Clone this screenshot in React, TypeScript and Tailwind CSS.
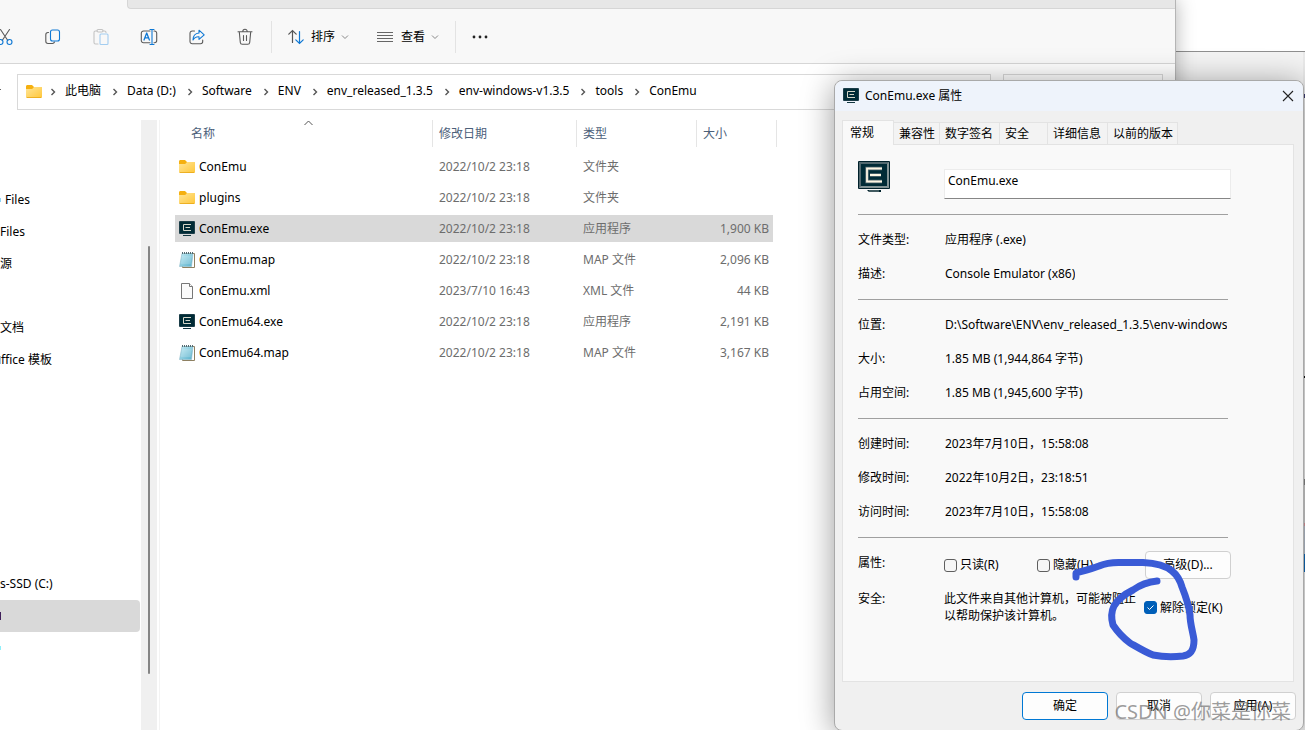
import { useState } from "react";
import type { ReactNode } from "react";

type FileKind = "folder" | "exe" | "map" | "xml";

const files: { name: string; date: string; type: string; size: string; kind: FileKind }[] = [
  { name: "ConEmu", date: "2022/10/2 23:18", type: "文件夹", size: "", kind: "folder" },
  { name: "plugins", date: "2022/10/2 23:18", type: "文件夹", size: "", kind: "folder" },
  { name: "ConEmu.exe", date: "2022/10/2 23:18", type: "应用程序", size: "1,900 KB", kind: "exe" },
  { name: "ConEmu.map", date: "2022/10/2 23:18", type: "MAP 文件", size: "2,096 KB", kind: "map" },
  { name: "ConEmu.xml", date: "2023/7/10 16:43", type: "XML 文件", size: "44 KB", kind: "xml" },
  { name: "ConEmu64.exe", date: "2022/10/2 23:18", type: "应用程序", size: "2,191 KB", kind: "exe" },
  { name: "ConEmu64.map", date: "2022/10/2 23:18", type: "MAP 文件", size: "3,167 KB", kind: "map" },
];

const crumbs = [
  "此电脑",
  "Data (D:)",
  "Software",
  "ENV",
  "env_released_1.3.5",
  "env-windows-v1.3.5",
  "tools",
  "ConEmu",
];

// mark: the last pixel of an icon that is scrolled out on the left
const treeItems = [
  { text: "" },
  { text: "" },
  { text: "Files", mark: "mr-1 h-1 bg-[#8ed3f7]" },
  { text: "Files" },
  { text: "源" },
  { text: "" },
  { text: "文档" },
  { text: "ffice 模板", mark: "h-2 bg-[#9fc3e8]" },
  { text: "" },
  { text: "" },
  { text: "" },
  { text: "" },
  { text: "" },
  { text: "" },
  { text: "s-SSD (C:)" },
  { text: "", mark: "h-2 bg-[#40205a]", selected: true },
  { text: "", mark: "h-1 bg-[#8ff0fa]" },
];

const tabs = [
  { label: "兼容性", width: "w-[46px]" },
  { label: "数字签名", width: "w-[60px]" },
  { label: "安全", width: "w-12" },
  { label: "详细信息", width: "w-[60px]" },
  { label: "以前的版本", width: "w-[70px]" },
];

const sections = [
  [
    ["文件类型:", "应用程序 (.exe)"],
    ["描述:", "Console Emulator (x86)"],
  ],
  [
    ["位置:", "D:\\Software\\ENV\\env_released_1.3.5\\env-windows"],
    ["大小:", "1.85 MB (1,944,864 字节)"],
    ["占用空间:", "1.85 MB (1,945,600 字节)"],
  ],
  [
    ["创建时间:", "2023年7月10日，15:58:08"],
    ["修改时间:", "2022年10月2日，23:18:51"],
    ["访问时间:", "2023年7月10日，15:58:08"],
  ],
];

// edges of the windows that peek out right of the dialog
const slivers = [
  { height: "h-[42px]", color: "bg-[#e9e9e9]" },
  { height: "h-1", color: "bg-[#3b3b70]" },
  { height: "h-[278px]", color: "bg-[#ebebeb]" },
  { height: "h-0.5", color: "bg-[#111111]" },
  { height: "h-[101px]", color: "bg-[#f0f0f0]" },
  { height: "h-[6px]", color: "bg-[#8a8a8a]" },
  { height: "h-[38px]", color: "bg-[#cfcfcf]" },
  { height: "h-[3px]", color: "bg-[#e09aa0]" },
  { height: "h-[28px]", color: "bg-[#b9c3d0]" },
  { height: "h-[18px]", color: "bg-[#0f6cbd]" },
];

function FolderIcon() {
  return (
    <svg width="16" height="16" viewBox="0 0 16 16" className="shrink-0">
      <defs>
        <linearGradient id="folder" x1="0" y1="0" x2="1" y2="1">
          <stop offset="0" stopColor="#ffe597" />
          <stop offset="1" stopColor="#ffc73a" />
        </linearGradient>
      </defs>
      <path d="M0 2.5C0 1.7.6 1 1.400 1H6l2 2h6.500c.8 0 1.500.6 1.500 1.400V8H0z" fill="#f5b010" />
      <path d="M0 5h6.200L8 3h6.800c.7 0 1.200.5 1.200 1.200v8.600c0 .7-.5 1.200-1.200 1.200H1.200C.5 14 0 13.500 0 12.800z" fill="url(#folder)" />
      <path d="M.3 13.300c.2.400.5.700.9.700h13.600c.4 0 .7-.3.9-.7z" fill="#e8a512" />
    </svg>
  );
}

function ExeIcon() {
  return (
    <svg width="16" height="16" viewBox="0 0 16 16" className="shrink-0">
      <rect x="0" y="0" width="16" height="13" rx="1" fill="#1b3d48" />
      <rect x="1" y="1" width="14" height="11" fill="#002b36" />
      <path d="M12 3.500H4.500v6H12M6.500 6.500H11" fill="none" stroke="#d5d6c9" />
      <rect x="4" y="14" width="8" height="1" fill="#123640" />
    </svg>
  );
}

function BigExeIcon() {
  return (
    <svg width="32" height="32" viewBox="0 0 32 32" className="shrink-0">
      <rect width="32" height="28" rx="1" fill="#00212b" />
      <rect x="1" y="1" width="30" height="26" fill="#839496" />
      <path d="M1 1h30l-2 2H3v22l-2 2z" fill="#53696f" />
      <rect x="3" y="3" width="26" height="22" fill="#002b36" />
      <path d="M24 7.500H9v13h15M12 14h11" fill="none" stroke="#586e75" strokeWidth="3.500" />
      <path d="M24 7.500H9v13h15M12 14h11" fill="none" stroke="#fdf6e3" strokeWidth="1.800" />
      <path d="M9 29h14v2H11z" fill="#00212b" />
      <path d="M11 30h10" stroke="#839496" />
    </svg>
  );
}

function MapIcon() {
  return (
    <svg width="16" height="16" viewBox="0 0 16 16" className="shrink-0">
      <defs>
        <linearGradient id="note" x1="0" y1="0" x2="1" y2="1">
          <stop offset="0" stopColor="#c4ecf5" />
          <stop offset="1" stopColor="#58b0cb" />
        </linearGradient>
      </defs>
      <path d="M5 1.500h10.500v14H3.500z" fill="#fff" stroke="#8e8061" />
      <path d="M3 1.500h11l-1.500 13H.500z" fill="url(#note)" stroke="#89b8c7" strokeWidth=".6" />
      <path d="M3 5h9.500M2.700 7h9.500M2.400 9h9.500M2 11h9.700" stroke="#fff" strokeWidth=".5" opacity=".6" />
      <path d="M3 1h11" stroke="#536a72" strokeWidth="1.800" strokeDasharray="1 1" />
    </svg>
  );
}

function XmlIcon() {
  return (
    <svg width="16" height="16" viewBox="0 0 16 16" className="shrink-0" fill="#fbfbfb" stroke="#777" strokeWidth="1">
      <path d="M2.500.500h8l3 3v12h-11z" />
      <path d="M10.500.500v3h3" />
    </svg>
  );
}

function FileIcon({ kind }: { kind: FileKind }) {
  if (kind === "folder") return <FolderIcon />;
  if (kind === "exe") return <ExeIcon />;
  if (kind === "map") return <MapIcon />;
  return <XmlIcon />;
}

function Chevron({ dir }: { dir: "right" | "down" | "up" }) {
  if (dir === "right") {
    return (
      <svg width="6" height="8" viewBox="0 0 6 8" fill="none" stroke="#555" strokeWidth="1.400" className="shrink-0">
        <path d="M1.500 1l3 3-3 3" />
      </svg>
    );
  }
  if (dir === "down") {
    return (
      <svg width="8" height="6" viewBox="0 0 8 6" fill="none" stroke="#888" className="ml-[6px]">
        <path d="M1 1.500l3 3 3-3" />
      </svg>
    );
  }
  return (
    <svg width="9" height="6" viewBox="0 0 9 6" fill="none" stroke="#555">
      <path d="M.500 5l4-4 4 4" />
    </svg>
  );
}

function ToolButton({ label, children }: { label: string; children: ReactNode }) {
  return (
    <button aria-label={label} className="flex h-10 w-12 shrink-0 items-center justify-center">
      <svg width="18" height="18" viewBox="0 0 18 18" fill="none" stroke="#5a5a5a" strokeWidth="1.100" strokeLinecap="round" strokeLinejoin="round">
        {children}
      </svg>
    </button>
  );
}

function Toolbar() {
  return (
    <div className="flex h-[54px] items-center pt-px">
      <div className="-ml-[19px] flex">
        <ToolButton label="剪切">
          <path d="M4.500 1.500l7.300 11M13.500 1.500L6.200 12.500" />
          <circle cx="4.500" cy="14" r="2.500" stroke="#0f78d4" />
          <circle cx="13.500" cy="14" r="2.500" stroke="#0f78d4" />
        </ToolButton>
        <ToolButton label="复制">
          <path d="M4.500 4.500H4A2.200 2.200 0 0 0 1.800 6.700v6.600A2.200 2.200 0 0 0 4 15.500h4.500a2.200 2.200 0 0 0 2-1.500" />
          <rect x="6.500" y="2" width="9" height="11" rx="2" stroke="#0f78d4" />
        </ToolButton>
        <ToolButton label="粘贴">
          <g stroke="#c4c4c4">
            <path d="M5 3H3.500A1.500 1.500 0 0 0 2 4.500v10A1.500 1.500 0 0 0 3.500 16H6M11 3h1.500A1.500 1.500 0 0 1 14 4.500" />
            <rect x="5" y="1.500" width="6" height="2.500" rx="1.200" />
          </g>
          <rect x="8" y="6" width="8" height="10.500" rx="1" stroke="#a3cdf0" />
        </ToolButton>
        <ToolButton label="重命名">
          <path d="M10 3H3.500A2.200 2.200 0 0 0 1.300 5.200v7.300a2.200 2.200 0 0 0 2.200 2.200H10M14 3h.500a2.200 2.200 0 0 1 2.200 2.200v7.300a2.200 2.200 0 0 1-2.200 2.200H14" />
          <g stroke="#0f78d4">
            <path d="M12 1.500v15M10 1.500h4M10 16.500h4" />
            <path d="M4 12l2.700-7 2.700 7M5 9.800h3.500" strokeWidth="1.300" />
          </g>
        </ToolButton>
        <ToolButton label="共享">
          <path d="M6.500 3H4.200A2.200 2.200 0 0 0 2 5.200v8.300a2.200 2.200 0 0 0 2.200 2.200h8.300a2.200 2.200 0 0 0 2.200-2.200V12" />
          <path d="M11 2.200l5.200 4.600L11 11.300V8.700C8 8.500 6.300 9.500 5 12c.1-4.200 2.200-6.700 6-7z" stroke="#0f78d4" />
        </ToolButton>
        <ToolButton label="删除">
          <path d="M2 3.800h14M6.800 3.500a2.200 2.200 0 0 1 4.400 0M3.300 4l1 10.500a2 2 0 0 0 2 1.800h5.400a2 2 0 0 0 2-1.800l1-10.500M7.500 7.500v5M10.500 7.500v5" />
        </ToolButton>
      </div>
      <div className="ml-0.5 h-8 w-px bg-[#e3e3e3]" />
      <button className="ml-4 flex items-center">
        <svg width="16" height="16" viewBox="0 0 16 16" fill="none" strokeWidth="1.200" strokeLinecap="round" className="mr-[7px]">
          <path d="M4.500 13.500v-12M.800 5.200l3.700-3.700 3.700 3.700" stroke="#555" />
          <path d="M11.500 2.500v12M7.800 10.800l3.700 3.700 3.700-3.700" stroke="#0f78d4" />
        </svg>
        排序
        <Chevron dir="down" />
      </button>
      <button className="ml-7 flex items-center">
        <svg width="16" height="12" viewBox="0 0 16 12" stroke="#666" className="mr-2">
          <path d="M0 1.500h16M0 4.500h16M0 7.500h16M0 10.500h16" />
        </svg>
        查看
        <Chevron dir="down" />
      </button>
      <div className="ml-4 h-8 w-px bg-[#e3e3e3]" />
      <button aria-label="更多" className="ml-4">
        <svg width="16" height="4" viewBox="0 0 16 4" fill="#222">
          <circle cx="2" cy="2" r="1.400" />
          <circle cx="8" cy="2" r="1.400" />
          <circle cx="14" cy="2" r="1.400" />
        </svg>
      </button>
    </div>
  );
}

function FileTable() {
  const headers = [
    { label: "名称", cls: "w-[258px]", pad: "pl-4" },
    { label: "修改日期", cls: "w-36", pad: "pl-[6px]" },
    { label: "类型", cls: "w-[120px]", pad: "pl-[6px]" },
    { label: "大小", cls: "w-20", pad: "pl-[6px]" },
  ];

  return (
    <table className="ml-[15px] w-[602px] table-fixed border-separate border-spacing-0 self-start">
      <thead>
        <tr className="h-[31px]">
          {headers.map((h, i) => (
            <th key={h.label} className={`${h.cls} p-0 align-top font-normal`}>
              <div className={`relative flex h-[27px] items-center border-r border-[#e5e5e5] text-[#4c607a] ${h.pad}`}>
                {h.label}
                {i === 0 && (
                  <span className="absolute top-0 left-[129px]">
                    <Chevron dir="up" />
                  </span>
                )}
              </div>
            </th>
          ))}
        </tr>
      </thead>
      <tbody>
        {files.map((f) => {
          const bg = f.name === "ConEmu.exe" ? "bg-[#d9d9d9]" : "";
          return (
            <tr key={f.name} className="h-[31px] text-[#6d6d6d]">
              <td className={`border-y-2 border-transparent bg-clip-padding p-0 pl-1 text-black ${bg}`}>
                <div className="flex items-center gap-1">
                  <FileIcon kind={f.kind} />
                  {f.name}
                </div>
              </td>
              <td className={`border-y-2 border-transparent bg-clip-padding p-0 pl-[6px] ${bg}`}>{f.date}</td>
              <td className={`border-y-2 border-transparent bg-clip-padding p-0 pl-[6px] ${bg}`}>{f.type}</td>
              <td className={`border-y-2 border-r-4 border-transparent bg-clip-padding p-0 pr-1 text-right ${bg}`}>{f.size}</td>
            </tr>
          );
        })}
      </tbody>
    </table>
  );
}

function Explorer() {
  return (
    <div className="z-10 flex min-w-0 flex-1 flex-col border-r border-[#b5b5b5] bg-white shadow-[0_0_18px_rgba(0,0,0,0.3)]">
      <header className="border-b border-[#d6d6d6] bg-[#f8f8f8]">
        <div className="ml-[127px] h-[9px] rounded-bl border-b border-l border-[#d6d6d6] bg-[#e7e7e7]" />
        <Toolbar />
      </header>
      <div className="flex pt-[10px] pr-3 pb-[10px]">
        <span className="h-9 w-[17px] pt-[15px]">
          <span className="block h-px w-px bg-[#666]" />
        </span>
        <nav className="flex h-9 min-w-0 flex-1 items-center border border-[#d9d9d9] pl-2">
          <FolderIcon />
          {crumbs.map((c) => (
            <span key={c} className="flex items-center whitespace-nowrap">
              <span className="mr-[9px] ml-2">
                <Chevron dir="right" />
              </span>
              <a href="#" className="pr-[3px] pb-0.5">{c}</a>
            </span>
          ))}
        </nav>
        <input aria-label="搜索" className="ml-3 h-9 w-40 border border-[#d9d9d9]" />
      </div>
      <div className="flex flex-1">
        <ul className="w-[141px] overflow-hidden pr-px">
          {treeItems.map((t, i) => (
            <li
              key={i}
              className={`flex h-8 items-center whitespace-nowrap ${t.selected ? "rounded-r-sm bg-[#d9d9d9]" : ""}`}
            >
              {t.mark && <span className={`w-px ${t.mark}`} />}
              {t.text}
            </li>
          ))}
        </ul>
        <div className="w-4 bg-[#f0f0f0] pt-[126px]">
          <div className="ml-[7px] h-[428px] w-0.5 rounded bg-[#858585]" />
        </div>
        <div className="ml-0.5 w-px bg-[#f3f3f3]" />
        <FileTable />
      </div>
    </div>
  );
}

function CheckBox({ label, initial }: { label: string; initial: boolean }) {
  const [checked, setChecked] = useState(initial);

  return (
    <label className="flex items-center gap-[3px] whitespace-nowrap">
      <span className="grid">
        <input
          type="checkbox"
          checked={checked}
          onChange={(e) => setChecked(e.target.checked)}
          className="col-start-1 row-start-1 size-[13px] appearance-none rounded-[3px] border border-[#5f5f5f] bg-[#f6f6f6] checked:border-[#005fb8] checked:bg-[#005fb8]"
        />
        {checked && (
          <svg width="13" height="13" viewBox="0 0 13 13" fill="none" stroke="#fff" className="pointer-events-none col-start-1 row-start-1">
            <path d="M3.500 6.500l2 2 4-4" />
          </svg>
        )}
      </span>
      {label}
    </label>
  );
}

function PropertiesDialog() {
  const [fileName, setFileName] = useState("ConEmu.exe");

  return (
    <div className="absolute top-20 right-px z-20 w-[470px] rounded-lg border border-[#a9a9a9] bg-[#f0f0f0] shadow-[0_4px_32px_rgba(0,0,0,0.4)]">
      <div className="flex h-[30px] items-center rounded-t-lg bg-[#eef3fb] pr-[9px] pl-2">
        <ExeIcon />
        <h1 className="ml-[6px] flex-1">ConEmu.exe 属性</h1>
        <button aria-label="关闭">
          <svg width="12" height="12" viewBox="0 0 12 12" stroke="#222" strokeWidth="1.100">
            <path d="M1 1l10 10M11 1L1 11" />
          </svg>
        </button>
      </div>

      <div className="pt-[9px] pr-[9px] pl-[7px]">
        <div role="tablist" className="flex items-end">
          <button role="tab" aria-selected="true" className="z-10 -mb-px h-[25px] w-[52px] border border-b-0 border-[#e3e3e3] bg-[#f9f9f9] pr-3">
            常规
          </button>
          {tabs.map((t) => (
            <button role="tab" key={t.label} className={`h-[22px] border-t border-r border-[#e3e3e3] bg-[#f3f3f3] pl-[5px] text-left whitespace-nowrap ${t.width}`}>
              {t.label}
            </button>
          ))}
        </div>

        <div className="h-[538px] border border-[#e3e3e3] bg-[#f9f9f9] pt-4 pr-[62px] pl-[15px]">
          <div className="flex h-[45px]">
            <div className="w-[86px]">
              <BigExeIcon />
            </div>
            <input
              aria-label="文件名"
              value={fileName}
              onChange={(e) => setFileName(e.target.value)}
              className="mt-2 h-[30px] min-w-0 flex-1 border border-[#ececec] border-b-[#868686] bg-white px-[3px] pb-2 outline-none"
            />
          </div>

          <div className="pt-2">
            {sections.map((rows, i) => (
              <dl key={i} className="mb-2">
                <div className="mr-[3px] h-px bg-[#a0a0a0]" />
                <div className="pt-2">
                  {rows.map(([label, value]) => (
                    <div key={label} className="flex h-[34px] items-center">
                      <dt className="w-[87px] shrink-0">{label}</dt>
                      <dd className="min-w-0 overflow-hidden whitespace-nowrap">{value}</dd>
                    </div>
                  ))}
                </div>
              </dl>
            ))}
            <div className="mr-[3px] h-px bg-[#a0a0a0]" />
          </div>

          <div className="mt-[13px] flex h-7 items-center">
            <span className="w-[86px] pb-1">属性:</span>
            <div className="w-[93px]">
              <CheckBox label="只读(R)" initial={false} />
            </div>
            <CheckBox label="隐藏(H)" initial={false} />
            <button className="ml-auto h-7 w-[86px] rounded border border-[#d0d0d0] bg-[#fdfdfd]">高级(D)...</button>
          </div>

          <div className="mt-[11px] flex leading-[17px]">
            <span className="w-[86px]">安全:</span>
            <p className="w-[200px]">此文件来自其他计算机，可能被阻止以帮助保护该计算机。</p>
            <CheckBox label="解除锁定(K)" initial={true} />
          </div>
        </div>
      </div>

      <div className="flex justify-end gap-2 pt-[10px] pr-[7px] pb-[10px]">
        <button className="h-7 w-[86px] rounded border border-[#0078d4] bg-[#fdfdfd]">确定</button>
        <button className="h-7 w-[86px] rounded border border-[#d0d0d0] bg-[#fdfdfd]">取消</button>
        <button className="h-7 w-[86px] rounded border border-[#d0d0d0] bg-[#fdfdfd]">应用(A)</button>
      </div>

      {/* pen stroke round the unblock option */}
      <svg width="130" height="110" viewBox="1070 555 130 110" className="pointer-events-none absolute top-[474px] left-[235px]" fill="none" stroke="#3a5bd6" strokeWidth="7" strokeLinecap="round" strokeLinejoin="round">
        <path d="M1076 577V573C1083 571 1091 569 1099 566C1106 563 1112 562 1122 562.500H1143C1156 563 1166 566 1172 571C1177 575 1180 580 1182 587C1186 597 1189 606 1190 615C1190 624 1193 632 1194 640C1194 651 1190 655 1183 656C1174 657 1163 657 1153 655C1145 652 1137 647 1130 643C1122 637 1117 631 1113 625C1111 618 1111 612 1114 606C1118 599 1125 594 1133 590C1140 585 1147 582 1157 581" />
      </svg>
      <p className="pointer-events-none absolute right-3 bottom-1 text-xl leading-7 whitespace-nowrap text-[#707070]/70">CSDN @你菜是你菜</p>
    </div>
  );
}

export default function App() {
  return (
    <main className="relative flex min-h-screen overflow-hidden bg-[#f3f3f3] font-['Noto_Sans','Noto_Sans_CJK_SC',sans-serif] text-xs text-black">
      <Explorer />
      <div className="w-[129px]">
        <div className="h-[52px] border-b border-[#8f8f8f] bg-white" />
        <div className="ml-auto w-0.5">
          {slivers.map((s, i) => (
            <div key={i} className={`${s.height} ${s.color}`} />
          ))}
        </div>
      </div>
      <PropertiesDialog />
    </main>
  );
}
